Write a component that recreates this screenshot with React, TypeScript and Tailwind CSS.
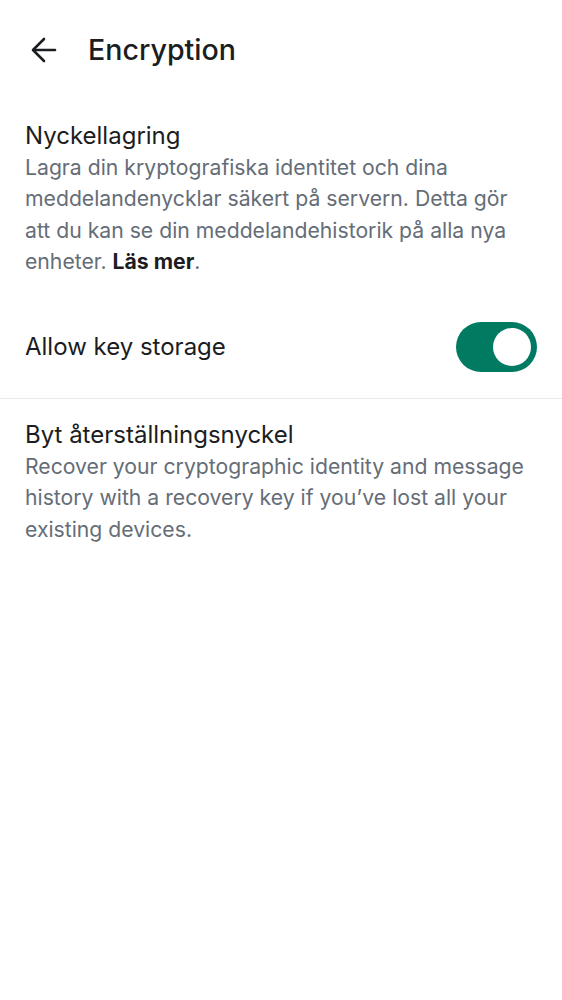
import { useState } from 'react';

function BackArrow() {
  return (
    <svg width="26" height="26" viewBox="0 0 26 26" fill="none" stroke="#1b1d22" strokeWidth="2.6" strokeLinecap="round" strokeLinejoin="round">
      <path d="M24 13H2.5" />
      <path d="M13 2 2 13l11 11" />
    </svg>
  );
}

function Toggle({ on, onChange }: { on: boolean; onChange: () => void }) {
  return (
    <button
      onClick={onChange}
      className={`relative w-[81px] h-[50px] rounded-full shrink-0 ${on ? 'bg-[#007a61]' : 'bg-[#cdd3da]'}`}
    >
      <span
        className={`absolute top-[6px] w-[38px] h-[38px] rounded-full bg-white ${on ? 'left-[37px]' : 'left-[6px]'}`}
      />
    </button>
  );
}

export default function App() {
  const [allow, setAllow] = useState(true);

  return (
    <div className="min-h-screen bg-white font-['Inter',sans-serif] text-[#1b1d22]">
      {/* Top bar */}
      <header className="flex items-center h-[100px] pl-[31px]">
        <BackArrow />
        <h1 className="ml-[31px] text-[28.6px] font-medium leading-none">Encryption</h1>
      </header>

      {/* Key storage */}
      <section className="px-[25px] pt-[20px]">
        <h2 className="text-[24px] leading-[32px]">Nyckellagring</h2>
        <p className="text-[21.2px] leading-[31.3px] text-[#656d77]">
          Lagra din kryptografiska identitet och dina meddelandenycklar säkert på servern. Detta gör att du kan se din meddelandehistorik på alla nya enheter.{' '}
          <span className="font-bold text-[#1b1d22]">Läs mer</span>.
        </p>
      </section>

      <div className="flex items-center justify-between px-[25px] pt-[24px] pb-[26px] mt-[21px]">
        <span className="text-[24px]">Allow key storage</span>
        <Toggle on={allow} onChange={() => setAllow(!allow)} />
      </div>

      <div className="h-px bg-[#e9e9eb]" />

      {/* Recovery key */}
      <section className="px-[25px] pt-[20px]">
        <h2 className="text-[24px] leading-[32px]">Byt återställningsnyckel</h2>
        <p className="text-[21.2px] leading-[31.3px] text-[#656d77]">
          Recover your cryptographic identity and message history with a recovery key if you’ve lost all your existing devices.
        </p>
      </section>
    </div>
  );
}
